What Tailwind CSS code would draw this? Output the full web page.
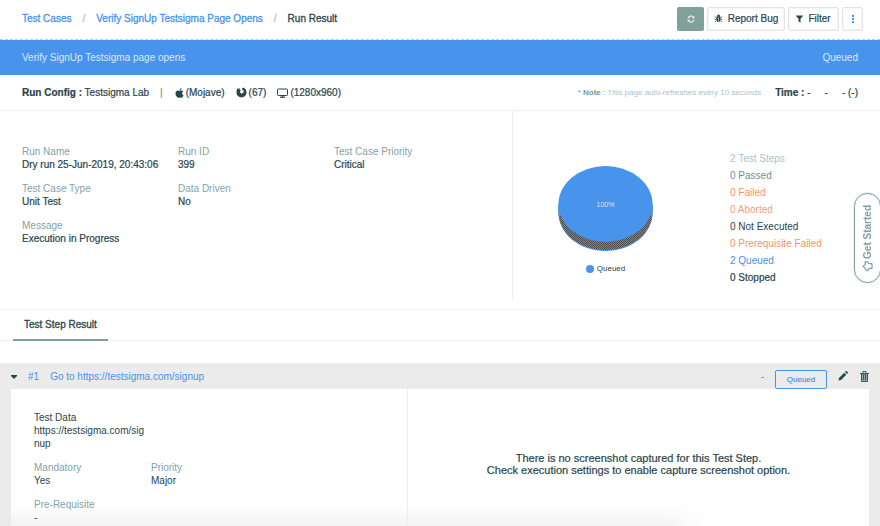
<!DOCTYPE html>
<html lang="en">
<head>
<meta charset="utf-8">
<meta name="viewport" content="width=device-width, initial-scale=1">
<title>Run Result</title>
<script src="https://cdn.jsdelivr.net/npm/@tailwindcss/browser@4"></script>
</head>
<body class="flex h-screen flex-col overflow-hidden bg-white font-['Liberation_Sans',Arial,sans-serif] text-[10px] leading-[13px] text-[#28444c]">

<header class="flex h-10 shrink-0 items-center justify-between border-b border-dashed border-[#c3cdd3] pr-[17px] pl-[22px]">
  <nav aria-label="Breadcrumb" class="flex items-center gap-[11px] pb-[2px] [-webkit-text-stroke:0.3px]">
    <a href="#" class="text-[#4894ec]">Test Cases</a>
    <span class="text-[#b4c4cc]">/</span>
    <a href="#" class="text-[#4894ec]">Verify SignUp Testsigma Page Opens</a>
    <span class="text-[#b4c4cc]">/</span>
    <span>Run Result</span>
  </nav>
  <div class="flex gap-[3px] pb-[2px] [-webkit-text-stroke:0.2px]">
    <button aria-label="Refresh" class="flex h-6 w-[27px] items-center justify-center rounded-xs bg-[#80a09a] text-[#eef4f2]">
      <svg class="size-2" viewBox="0 0 512 512" fill="none" stroke="currentColor" stroke-width="72"><path d="M70 215a190 190 0 0 1 330-85M442 297a190 190 0 0 1-330 85"/><path d="M470 50v165H305zM42 462V297h165z" fill="currentColor" stroke="none"/></svg>
    </button>
    <button class="flex h-6 w-[78px] items-center justify-center gap-[5px] rounded-xs border border-[#e4e4e4] shadow-[inset_0_0_0_1px_#f5f5f5]">
      <svg class="size-[9px]" viewBox="0 0 18 18" fill="none" stroke="currentColor" stroke-width="1.6"><path d="M6 5a3 3 0 0 1 6 0z" fill="currentColor"/><path d="M5 6h3.500v10C6 16 5 14 5 11zM13 6H9.500v10c2.500 0 3.500-2 3.500-5z" fill="currentColor" stroke="none"/><path d="M5 8 2 5M13 8l3-3M5 10.500H1M13 10.500h4M5 13l-3 3M13 13l3 3"/></svg>
      Report Bug
    </button>
    <button class="flex h-6 w-[51px] items-center justify-center gap-[5px] rounded-xs border border-[#e4e4e4] shadow-[inset_0_0_0_1px_#f5f5f5]">
      <svg class="h-2 w-[7px]" viewBox="0 0 14 16" fill="currentColor"><path d="M.5 1h13c.5 0 .6.600.3 1L9 7.500v8L5 12.500v-5L.2 2C-.1 1.600 0 1 .5 1z"/></svg>
      Filter
    </button>
    <button aria-label="More" class="flex h-6 w-[21px] items-center justify-center rounded-xs border border-[#e4e4e4] text-[#4894ec] shadow-[inset_0_0_0_1px_#f5f5f5]">
      <svg class="h-2 w-[2px]" viewBox="0 0 2 8" fill="currentColor"><path d="M0 0h2v2H0zM0 3h2v2H0zM0 6h2v2H0z"/></svg>
    </button>
  </div>
</header>

<section class="flex h-[35px] shrink-0 items-center justify-between bg-[#4894ec] pr-[22px] pl-[22px] text-[#dfe8ee]">
  <h1>Verify SignUp Testsigma page opens</h1>
  <span>Queued</span>
</section>

<section class="flex h-9 shrink-0 items-center justify-between border-b border-[#eeeeee] pr-[22px] pl-[22px]">
  <div class="flex items-center [-webkit-text-stroke:0.2px]">
    <span><b>Run Config :</b> Testsigma Lab</span>
    <span class="ml-[11px] text-[#6f9a98]">|</span>
    <span class="ml-3 flex items-center gap-[2px]">
      <svg class="h-[10px] w-[9px]" viewBox="0 20 384 470" fill="currentColor"><path d="M318.7 268.7c-.2-36.7 16.400-64.400 50-84.800-18.800-26.900-47.200-41.700-84.700-44.600-35.500-2.800-74.300 20.700-88.500 20.700-15 0-49.400-19.700-76.400-19.700C63.300 141.200 4 184.800 4 273.500q0 39.300 14.400 81.200c12.800 36.700 59 126.700 107.200 125.200 25.200-.6 43-17.900 75.800-17.900 31.800 0 48.300 17.900 76.400 17.900 48.600-.7 90.400-82.500 102.600-119.300-65.200-30.700-61.700-90-61.700-91.900zm-56.600-164.200c27.300-32.400 24.800-61.900 24-72.500-24.100 1.400-52 16.400-67.900 34.900-17.500 19.800-27.800 44.300-25.600 71.900 26.100 2 49.900-11.400 69.500-34.300z"/></svg>
      (Mojave)
    </span>
    <span class="ml-[11px] flex items-center gap-[2px]">
      <svg class="size-[11px]" viewBox="0 0 22 22" fill="currentColor"><path d="M2 5l1-3 2 2c1-1 2-1.500 4-2C7 4 7 5 8 6l2 1-2 2c0 3 2 4 4 4 3-1 4-3 3-6l-3-2c0-2 1-3 3-4 4 2 6 6 6 10a10 10 0 0 1-20 0c0-2 0-4 1-6z"/></svg>
      (67)
    </span>
    <span class="ml-[11px] flex items-center gap-[2px]">
      <svg class="h-[10px] w-[11px]" viewBox="0 0 22 20" fill="none" stroke="currentColor" stroke-width="2"><rect x="1" y="2" width="20" height="13" rx="1.500"/><path d="M6 18.500h10" stroke-width="2.500"/><path d="M11 15v3"/></svg>
      (1280x960)
    </span>
  </div>
  <div class="flex items-center">
    <span class="text-[8px] text-[#a9c2d0]"><span class="text-[#6f9a98]">* <b>Note</b> :</span> This page auto-refreshes every 10 seconds</span>
    <span class="ml-[14px] flex gap-[14px] [-webkit-text-stroke:0.2px]"><span><b>Time :</b> -</span><span>-</span><span>- (-)</span></span>
  </div>
</section>

<section class="flex h-[199px] shrink-0 border-b border-[#eeeeee]">
  <dl class="mb-[10px] grid w-[513px] grid-cols-3 content-start gap-y-[11px] border-r border-[#eeeeee] pt-[34px] pr-[22px] pl-[22px]">
    <div><dt class="text-[#7fa3a8]">Run Name</dt><dd class="whitespace-nowrap [-webkit-text-stroke:0.2px]">Dry run 25-Jun-2019, 20:43:06</dd></div>
    <div><dt class="text-[#7fa3a8]">Run ID</dt><dd class="[-webkit-text-stroke:0.2px]">399</dd></div>
    <div><dt class="text-[#7fa3a8]">Test Case Priority</dt><dd class="[-webkit-text-stroke:0.2px]">Critical</dd></div>
    <div><dt class="text-[#7fa3a8]">Test Case Type</dt><dd class="[-webkit-text-stroke:0.2px]">Unit Test</dd></div>
    <div class="col-span-2"><dt class="text-[#7fa3a8]">Data Driven</dt><dd class="[-webkit-text-stroke:0.2px]">No</dd></div>
    <div class="col-span-3"><dt class="text-[#7fa3a8]">Message</dt><dd class="[-webkit-text-stroke:0.2px]">Execution in Progress</dd></div>
  </dl>
  <div class="flex flex-1 pt-[38px]">
    <figure class="ml-[45px] flex w-[95px] flex-col items-center pt-[17px]">
      <svg class="h-[86px] w-[95px]" viewBox="0 0 95 86" role="img" aria-label="Queued 100%">
        <defs><pattern id="shade" width="2" height="2" patternUnits="userSpaceOnUse"><path d="M0 0h2v2H0z" fill="#5f8fb4"/><path d="M0 0h1v1H0zM1 1h1v1H1z" fill="#4a4a4a"/></pattern></defs>
        <path d="M.5 39v8c0 21 21 38 47 38s47-17 47-38v-8z" fill="#4894ec"/>
        <path d="M.5 39v7c0 21 21 38 47 38s47-17 47-38v-7z" fill="url(#shade)"/>
        <path d="M.5 37v12l1.500 3V37zM94.500 37v12l-1.500 3V37z" fill="#4894ec"/>
        <ellipse cx="47.500" cy="38" rx="47" ry="38" fill="#4894ec"/>
        <text x="47.500" y="41" text-anchor="middle" font-size="7" fill="#dfe8ee">100%</text>
      </svg>
      <figcaption class="mt-[10px] flex items-center gap-[3px] text-[8px]"><span class="size-2 rounded-full bg-[#4894ec]"></span>Queued</figcaption>
    </figure>
    <ul class="ml-[77px] pt-px leading-[17px]">
      <li class="text-[#a9c2d0]">2 Test Steps</li>
      <li class="text-[#6d9090]">0 Passed</li>
      <li class="text-[#f09468]">0 Failed</li>
      <li class="text-[#f0a078]">0 Aborted</li>
      <li>0 Not Executed</li>
      <li class="text-[#f09468]">0 Prerequisite Failed</li>
      <li class="text-[#4894ec]">2 Queued</li>
      <li class="[-webkit-text-stroke:0.2px]">0 Stopped</li>
    </ul>
  </div>
</section>

<div role="tablist" class="flex h-[31px] shrink-0 border-b border-[#eeeeee] pl-[13px]">
  <button role="tab" aria-selected="true" class="h-[31px] border-b-2 border-[#80a09a] px-[11px] [-webkit-text-stroke:0.3px]">Test Step Result</button>
</div>

<main class="mt-[22px] flex min-h-0 flex-1 flex-col bg-[#ebebeb] px-[11px]">
  <div class="flex h-[26px] shrink-0 items-center justify-between text-[#4894ec]">
    <div class="flex items-center pt-px">
      <button aria-label="Collapse step" class="text-[#28444c]"><svg class="h-1 w-[6px]" viewBox="0 0 6 4" fill="currentColor"><path d="M0 0h6v1L3 4 0 1z"/></svg></button>
      <span class="ml-[11px]">#1</span>
      <a href="#" class="ml-[11px]">Go to https://testsigma.com/signup</a>
    </div>
    <div class="flex items-center">
      <span>-</span>
      <span class="mt-[7px] ml-[11px] flex h-[19px] w-[52px] items-center justify-center rounded-xs border border-[#4894ec] text-[8px] [-webkit-text-stroke:0.2px]">Queued</span>
      <button aria-label="Edit step" class="ml-[11px] text-[#28444c]"><svg class="size-[10px]" viewBox="0 0 20 20" fill="currentColor"><path d="M1 19l1-5L12.500 3.500l4 4L6 18zM14 2l1.500-1.500c.7-.7 1.500-.5 2 0l2 2c.6.600.6 1.400 0 2L18 6z"/></svg></button>
      <button aria-label="Delete step" class="ml-3 text-[#3c5a60]"><svg class="h-[11px] w-[9px]" viewBox="0 0 18 22" fill="none" stroke="currentColor" stroke-width="2"><path d="M3 6h12v15H3z" fill="#8fa9ab"/><path d="M0 5h18M6 4V1h6v3M7 8v10M11 8v10"/></svg></button>
    </div>
  </div>
  <div class="flex min-h-0 flex-1 bg-white">
    <dl class="grid w-[397px] shrink-0 grid-cols-[117px_1fr] content-start gap-y-[11px] border-r border-[#eeeeee] bg-linear-to-t from-[#f3f3f3] to-white to-[22px] pt-[22px] pl-[23px]">
      <div class="col-span-2"><dt>Test Data</dt><dd class="w-[113px] break-all">https://testsigma.com/signup</dd></div>
      <div><dt class="text-[#7fa3a8]">Mandatory</dt><dd>Yes</dd></div>
      <div><dt class="text-[#7fa3a8]">Priority</dt><dd>Major</dd></div>
      <div class="col-span-2"><dt class="text-[#7fa3a8]">Pre-Requisite</dt><dd>-</dd></div>
    </dl>
    <div class="flex flex-1 flex-col justify-between">
      <p class="pt-[63px] text-center text-[11px] leading-[12px] [-webkit-text-stroke:0.2px]">There is no screenshot captured for this Test Step.<br>Check execution settings to enable capture screenshot option.</p>
      <div class="h-[22px] w-[300px] bg-linear-to-t from-[#f3f3f3] to-white [mask-image:linear-gradient(to_right,black_85%,transparent)]"></div>
    </div>
  </div>
</main>

<button class="fixed top-[193px] -right-px flex h-[90px] w-[27px] items-center justify-center rounded-full border border-[#80a0a4] bg-white font-bold text-[#80a0a4] shadow-[0_0_2px_#b8ccd4]">
  <span class="flex rotate-180 items-center gap-[2px] [writing-mode:vertical-rl]">
    <svg class="size-[11px]" viewBox="0 0 22 22" fill="none" stroke="currentColor" stroke-width="2.400" stroke-linejoin="round"><path d="M20 11 11 2 8 7H2v9l7 1 1 3h6l-1-5z"/></svg>
    Get Started
  </span>
</button>
</body>
</html>
